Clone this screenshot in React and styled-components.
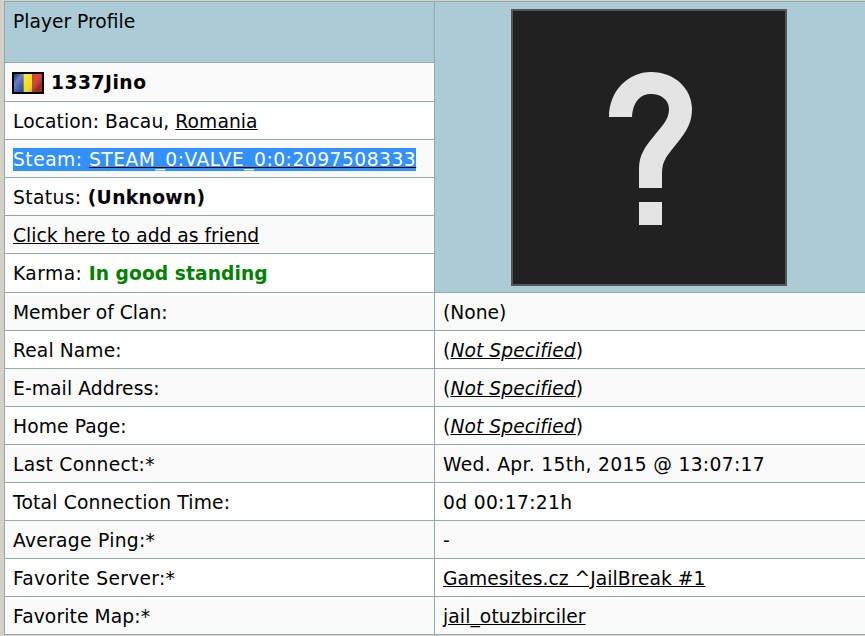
import React from 'react';
import styled, { createGlobalStyle } from 'styled-components';

const GlobalStyle = createGlobalStyle`
  html, body {
    margin: 0;
    padding: 0;
    background: #d4d0c8;
    overflow: hidden;
  }
`;

const Page = styled.div`
  width: 865px;
  height: 636px;
  padding: 1px 0 0 4px;
  box-sizing: border-box;
  background: #d4d0c8;
  overflow: hidden;
`;

const Table = styled.table`
  width: 870px;
  table-layout: fixed;
  border-collapse: collapse;
  font-family: "DejaVu Sans", Verdana, sans-serif;
  font-size: 18.7px;
  line-height: 22px;
  color: #000;
`;

const LabelCol = styled.col`
  width: 430px;
`;

const Cell = styled.td`
  height: ${props => (props.$tall ? 36 : 35)}px;
  padding: 2px 8px 0;
  box-sizing: content-box;
  border: 1px solid #95a9ab;
  background: ${props => (props.$shade ? '#fafafa' : '#fff')};
  letter-spacing: ${props => props.$track || 0}px;
  vertical-align: middle;
  white-space: nowrap;
`;

const HeadCell = styled(Cell)`
  height: 61px;
  padding-top: 9px;
  padding-bottom: 0;
  box-sizing: border-box;
  background: #abcbd6;
  vertical-align: top;
`;

const AvatarCell = styled(Cell)`
  padding: 0;
  background: #abcbd6;
  vertical-align: top;
`;

const Avatar = styled.svg`
  display: block;
  width: 276px;
  height: 277px;
  margin: 7px 0 0 76px;
`;

const NameRow = styled.div`
  display: flex;
  align-items: center;
  gap: 7px;
  font-weight: bold;
  letter-spacing: 0.5px;
`;

const Flag = styled.svg`
  display: block;
  width: 32px;
  height: 22px;
  margin: -1px 0 0 -1px;
`;

const Selected = styled.span`
  background: #3390ff;
  color: #fff;
  padding: 1px 0;
  letter-spacing: 0.49px;
`;

const Link = styled.a`
  color: inherit;
  text-decoration: underline;
  text-decoration-color: #000;
`;

const Bold = styled.b`
  letter-spacing: ${props => props.$track || 0}px;
`;

const Good = styled.b`
  color: #007f00;
  letter-spacing: 0.06px;
`;

const rows = [
  { label: 'Member of Clan:', value: '(None)', kind: 'plain' },
  { label: 'Real Name:', value: 'Not Specified', kind: 'missing', labelTrack: 0.1, valueTrack: 0.07 },
  { label: 'E-mail Address:', value: 'Not Specified', kind: 'missing', labelTrack: 0.1, valueTrack: 0.07 },
  { label: 'Home Page:', value: 'Not Specified', kind: 'missing', labelTrack: 0.1, valueTrack: 0.07 },
  { label: 'Last Connect:*', value: 'Wed. Apr. 15th, 2015 @ 13:07:17', kind: 'plain', labelTrack: 0.29, valueTrack: 0.32 },
  { label: 'Total Connection Time:', value: '0d 00:17:21h', kind: 'plain', labelTrack: 0.18, valueTrack: 0.33 },
  { label: 'Average Ping:*', value: '-', kind: 'plain', labelTrack: 0.29 },
  { label: 'Favorite Server:*', value: 'Gamesites.cz ^JailBreak #1', kind: 'link', labelTrack: 0.29, valueTrack: 0.04 },
  { label: 'Favorite Map:*', value: 'jail_otuzbirciler', kind: 'link', labelTrack: 0.1, valueTrack: 0.1 },
];

function renderValue(value, kind) {
  if (kind === 'link') return <Link href="#">{value}</Link>;
  if (kind === 'missing') return <>(<Link href="#"><i>{value}</i></Link>)</>;
  return value;
}

export default function App() {
  return (
    <Page>
      <GlobalStyle />
      <Table>
        <colgroup>
          <LabelCol />
          <col />
        </colgroup>
        <tbody>
          <tr>
            <HeadCell>Player Profile</HeadCell>
            <AvatarCell rowSpan={7}>
              <Avatar viewBox="0 0 276 277">
                <rect width="276" height="277" fill="#565656" />
                <rect x="2" y="2" width="272" height="273" fill="#212121" />
                <path d="M98 108 C98 82 117 63 140 63 C164 63 181 80 181 100 C181 114 175 123 167 133 C156 147 151 151 151 165 L151 179 L128 179 L128 160 C128 146 134 138 143 127 C152 116 158 110 158 100 C158 91 150 85 140 85 C130 85 122 92 121 108 Z" fill="#e4e4e4" />
                <rect x="128" y="193" width="23" height="23" fill="#e4e4e4" />
              </Avatar>
            </AvatarCell>
          </tr>
          <tr>
            <Cell $tall $shade>
              <NameRow>
                <Flag viewBox="0 0 32 22">
                  <defs>
                    <linearGradient id="sheen" x1="0" y1="0" x2="1" y2="0.5">
                      <stop offset="0" stopColor="#000" stopOpacity="0.25" />
                      <stop offset="0.25" stopColor="#fff" stopOpacity="0.3" />
                      <stop offset="0.6" stopColor="#fff" stopOpacity="0" />
                      <stop offset="1" stopColor="#000" stopOpacity="0.3" />
                    </linearGradient>
                  </defs>
                  <rect width="32" height="22" fill="#000" />
                  <rect x="2" y="2" width="9.5" height="18" fill="#2a4aa8" />
                  <rect x="11.5" y="2" width="9" height="18" fill="#f4dc20" />
                  <rect x="20.5" y="2" width="9.5" height="18" fill="#dc3c34" />
                  <rect x="2" y="2" width="28" height="18" fill="url(#sheen)" />
                </Flag>
                1337Jino
              </NameRow>
            </Cell>
          </tr>
          <tr>
            <Cell $track={0.08}>Location: Bacau, <Link href="#">Romania</Link></Cell>
          </tr>
          <tr>
            <Cell $shade>
              <Selected>Steam: <Link href="#">STEAM_0:VALVE_0:0:2097508333</Link></Selected>
            </Cell>
          </tr>
          <tr>
            <Cell $track={0.37}>Status: <Bold $track={0.33}>(Unknown)</Bold></Cell>
          </tr>
          <tr>
            <Cell $shade><Link href="#">Click here to add as friend</Link></Cell>
          </tr>
          <tr>
            <Cell $tall $track={0.43}>Karma: <Good>In good standing</Good></Cell>
          </tr>
          {rows.map(({ label, value, kind, labelTrack, valueTrack }, i) => (
            <tr key={label}>
              <Cell $shade={i % 2 === 0} $track={labelTrack}>{label}</Cell>
              <Cell $shade={i % 2 === 0} $track={valueTrack}>{renderValue(value, kind)}</Cell>
            </tr>
          ))}
        </tbody>
      </Table>
    </Page>
  );
}
